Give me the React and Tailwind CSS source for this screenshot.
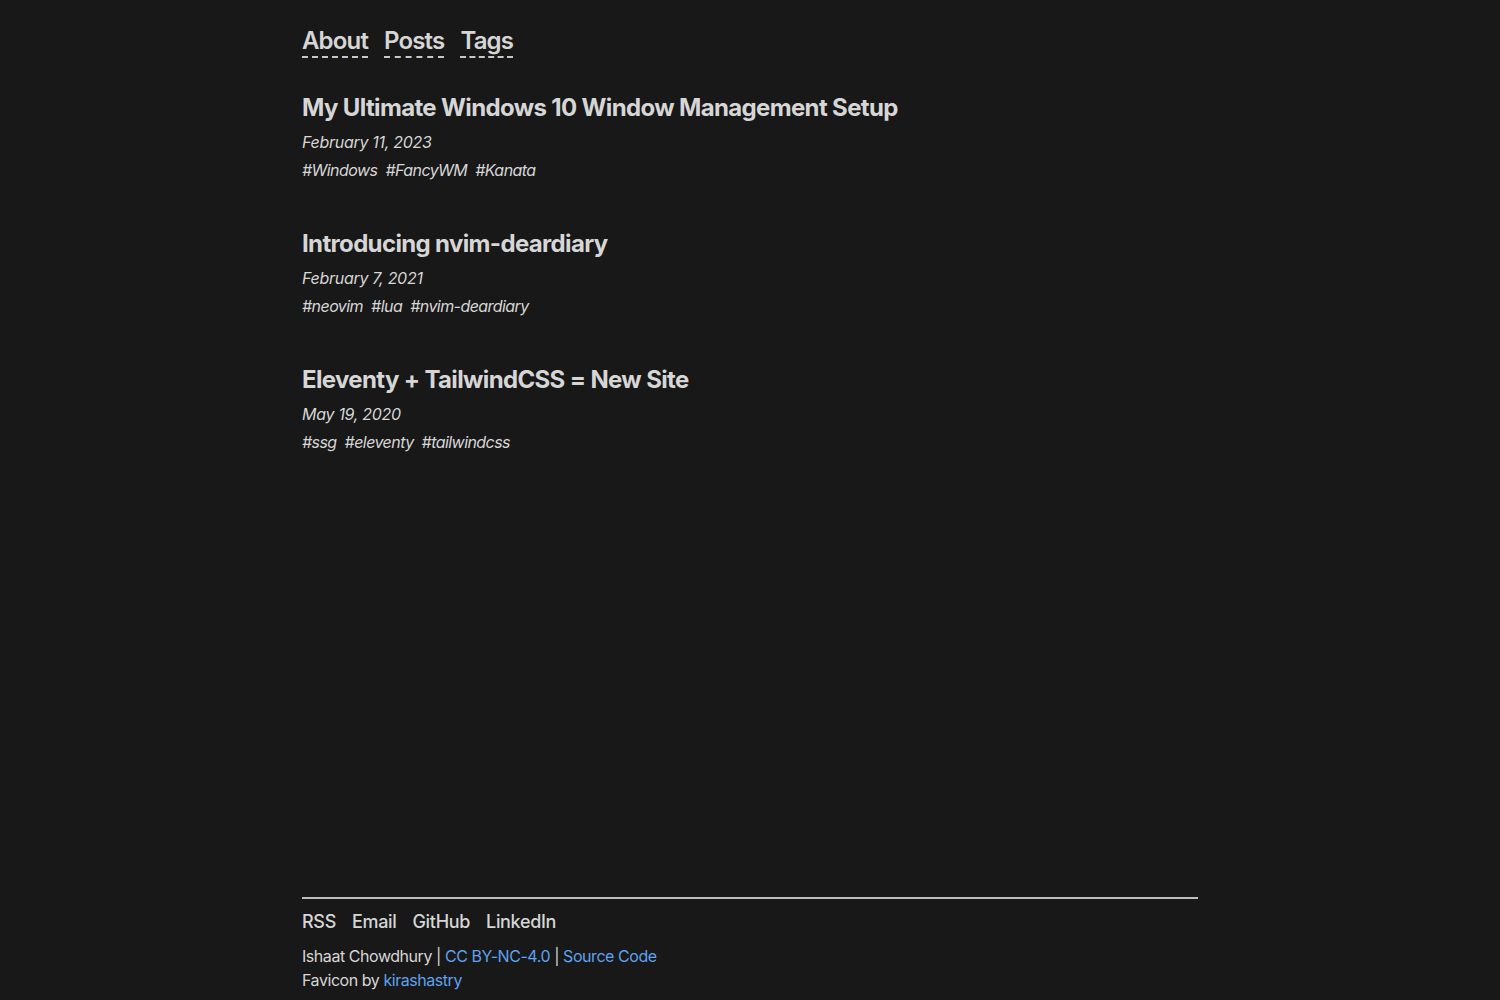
const posts = [
  {
    title: "My Ultimate Windows 10 Window Management Setup",
    date: "February 11, 2023",
    tags: ["Windows", "FancyWM", "Kanata"],
  },
  {
    title: "Introducing nvim-deardiary",
    date: "February 7, 2021",
    tags: ["neovim", "lua", "nvim-deardiary"],
  },
  {
    title: "Eleventy + TailwindCSS = New Site",
    date: "May 19, 2020",
    tags: ["ssg", "eleventy", "tailwindcss"],
  },
];

export default function App() {
  return (
    <div
      className="min-h-screen bg-[#181818] text-[#d6d6d6]"
      style={{ fontFamily: "Inter, 'Noto Sans', sans-serif" }}
    >
      <div className="max-w-4xl mx-auto min-h-screen flex flex-col">
        {/* Nav */}
        <nav className="pt-[26px] flex gap-4 text-2xl font-semibold">
          {["About", "Posts", "Tags"].map((n) => (
            <a
              key={n}
              href="#"
              className="leading-[30px] border-b-2 border-dashed border-[#c8c8c8] tracking-[-0.035em]"
            >
              {n}
            </a>
          ))}
        </nav>

        {/* Posts */}
        <main className="flex-1 mt-[34px] space-y-[46px]">
          {posts.map((p) => (
            <article key={p.title}>
              <h2 className="text-2xl leading-8 font-bold tracking-[-0.027em]">
                <a href="#">{p.title}</a>
              </h2>
              <p className="mt-[6px] italic text-base leading-6 tracking-[-0.018em]">
                {p.date}
              </p>
              <div className="mt-1 flex gap-2 italic text-base leading-6 tracking-[-0.035em]">
                {p.tags.map((t) => (
                  <a key={t} href="#">
                    #{t}
                  </a>
                ))}
              </div>
            </article>
          ))}
        </main>

        {/* Footer */}
        <footer className="border-t-2 border-[#bdbdbd] pt-[9px] pb-2">
          <div className="flex gap-4 text-lg leading-7 font-medium tracking-[-0.018em]">
            <a href="#">RSS</a>
            <a href="#">Email</a>
            <a href="#">GitHub</a>
            <a href="#">LinkedIn</a>
          </div>
          <div className="mt-2 text-base leading-6 tracking-[-0.028em]">
            <p>
              Ishaat Chowdhury |{" "}
              <a href="#" className="text-[#5ea2f0]">
                CC BY-NC-4.0
              </a>{" "}
              |{" "}
              <a href="#" className="text-[#5ea2f0]">
                Source Code
              </a>
            </p>
            <p>
              Favicon by{" "}
              <a href="#" className="text-[#5ea2f0]">
                kirashastry
              </a>
            </p>
          </div>
        </footer>
      </div>
    </div>
  );
}
